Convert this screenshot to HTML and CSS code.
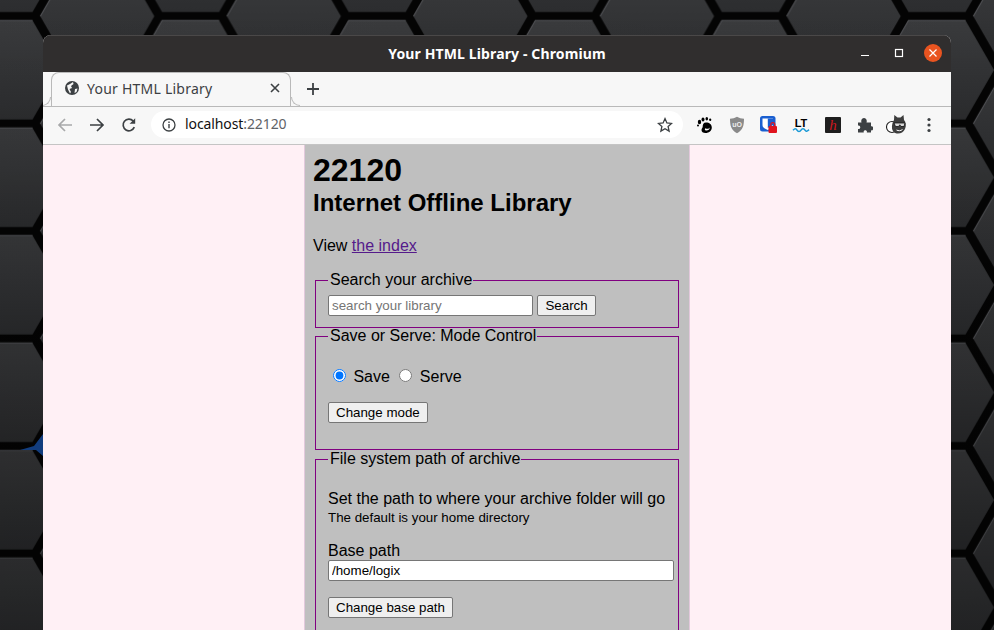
FILE: index.html
```html
<!DOCTYPE html>
<html lang="en">
<head>
<meta charset="utf-8">
<title>Your HTML Library</title>
<link rel="stylesheet" href="styles.css">
</head>
<body>
<svg class="wallpaper" width="994" height="630" aria-hidden="true">
  <defs>
    <linearGradient id="hexfill" x1="0" y1="0" x2="0" y2="1">
      <stop offset="0" stop-color="#3a3b3d"/>
      <stop offset="1" stop-color="#2c2d2f"/>
    </linearGradient>
    <linearGradient id="shade" x1="0" y1="0" x2="0" y2="1">
      <stop offset="0" stop-color="#000" stop-opacity="0"/>
      <stop offset="1" stop-color="#000" stop-opacity=".3"/>
    </linearGradient>
    <g id="hex">
      <polygon points="-57,0 -28.5,-49.5 28.5,-49.5 57,0 28.5,49.5 -28.5,49.5" fill="url(#hexfill)"/>
      <polyline points="-57,0 -28.5,-49.5 28.5,-49.5" fill="none" stroke="#55565a" stroke-width="1"/>
    </g>
    <pattern id="hexes" width="186.6" height="107.5" patternUnits="userSpaceOnUse" patternTransform="translate(4 70)">
      <rect width="186.6" height="107.5" fill="#040404"/>
      <use href="#hex" x="0" y="0"/>
      <use href="#hex" x="186.6" y="0"/>
      <use href="#hex" x="0" y="107.5"/>
      <use href="#hex" x="186.6" y="107.5"/>
      <use href="#hex" x="93.3" y="53.75"/>
    </pattern>
  </defs>
  <rect width="994" height="630" fill="url(#hexes)"/>
  <rect width="994" height="630" fill="url(#shade)"/>
  <path d="M20 450 L34 446 L43 434 L43 456 L36 450 Z" fill="#123d7e"/>
</svg>

<div class="window">
  <header class="titlebar">
    <span class="title">Your HTML Library - Chromium</span>
    <div class="winctrls">
      <svg class="winbtn" width="16" height="16" viewBox="0 0 16 16"><path d="M4 10.500h8" stroke="#fff" stroke-width="1.2"/></svg>
      <svg class="winbtn" width="16" height="16" viewBox="0 0 16 16"><rect x="4.500" y="4.500" width="7" height="7" fill="none" stroke="#fff" stroke-width="1.2"/></svg>
      <svg class="winbtn close" width="18" height="18" viewBox="0 0 18 18"><circle cx="9" cy="9" r="9" fill="#e95420"/><path d="M5.500 5.500l7 7M12.500 5.500l-7 7" stroke="#fff" stroke-width="1.2"/></svg>
    </div>
  </header>

  <div class="tabstrip">
    <div class="tab">
      <svg width="16" height="16" viewBox="0 0 16 16"><circle cx="8" cy="8" r="7" fill="#3c4043"/><path d="M3 5.500 L6 4 L9 2 L9.500 4 L7 6 L8 8 L5.500 9 L7 12 L6 13.500 L4 9.500 Z M11 9 L13.500 8.500 L12.500 12 L10.500 13 Z" fill="#f7f7f7"/></svg>
      <span class="tabtitle">Your HTML Library</span>
      <svg width="10" height="10" viewBox="0 0 10 10"><path d="M1 1l8 8M9 1l-8 8" stroke="#3c4043" stroke-width="1.6"/></svg>
    </div>
    <svg class="newtab" width="12" height="12" viewBox="0 0 12 12"><path d="M6 0v12M0 6h12" stroke="#3c4043" stroke-width="1.8"/></svg>
  </div>

  <div class="toolbar">
    <svg class="navicon" width="16" height="16" viewBox="0 0 16 16"><path d="M15 8H2M8 2 2 8l6 6" fill="none" stroke="#a8a9aa" stroke-width="1.7"/></svg>
    <svg class="navicon" width="16" height="16" viewBox="0 0 16 16"><path d="M1 8h13M8 2l6 6-6 6" fill="none" stroke="#3c4043" stroke-width="1.7"/></svg>
    <svg class="navicon" width="16" height="16" viewBox="0 0 16 16"><path d="M13.300 10.200A5.800 5.800 0 1 1 12.200 4" fill="none" stroke="#3c4043" stroke-width="1.7"/><path d="M14.200 1.200v5.600H8.600z" fill="#3c4043"/></svg>
    <div class="omnibox">
      <svg width="14" height="14" viewBox="0 0 14 14"><circle cx="7" cy="7" r="6" fill="none" stroke="#3c4043" stroke-width="1.3"/><path d="M7 6v4.200M7 3.400v1.500" stroke="#3c4043" stroke-width="1.4"/></svg>
      <span class="url">localhost<span class="urlport">:22120</span></span>
      <svg class="star" width="16" height="16" viewBox="0 0 16 16"><path d="M8 1.600l1.900 4.300 4.700.5-3.500 3.100 1 4.600L8 11.700l-4.100 2.400 1-4.600L1.400 6.400l4.700-.5z" fill="none" stroke="#3c4043" stroke-width="1.3"/></svg>
    </div>
    <div class="extensions">
      <svg width="18" height="18" viewBox="0 0 18 18"><path d="M10 6.500c3.500 0 5.800 2 5.800 5 0 3.300-2.800 5.500-6.300 5.500-2.500 0-4-1.200-4-3 0-1.500 1.200-2 1.200-3.300C6.700 8.500 7.500 6.500 10 6.500z" fill="#000"/><path d="M10.500 12.700c1.300.5 2.700-.2 3.300-1.500-.2 2.200-1.700 3.500-3.800 3.300-1.200-.1-1.500-1.500-.6-2.300z" fill="#f7f7f7"/><ellipse cx="3.500" cy="6" rx="1.700" ry="2.200" fill="#000"/><ellipse cx="7" cy="3.500" rx="1.500" ry="2" fill="#000"/><ellipse cx="10.800" cy="2.800" rx="1.300" ry="1.700" fill="#000"/><ellipse cx="14.200" cy="3.800" rx="1.100" ry="1.300" fill="#000"/><circle cx="2" cy="9.500" r="1" fill="#000"/></svg>
      <svg width="18" height="18" viewBox="0 0 18 18"><path d="M9 .8c2 1.200 4.500 1.800 7 2 0 6.500-1 11.500-7 14.400-6-2.900-7-7.900-7-14.400C4.500 2.600 7 2 9 .8z" fill="#8a8a8a"/><text x="9" y="11" class="ublock">uO</text></svg>
      <svg width="18" height="18" viewBox="0 0 18 18"><rect x="0" y="0" width="15.500" height="15.500" rx="2.500" fill="#1a5fd0"/><path d="M2.500 2.500h10.500v6.500c0 2.500-2.500 3.800-5.200 5-3-1.200-5.300-2.500-5.300-5z" fill="#fff"/><path d="M7.800 2.500h5.200v6.500L7.800 12z" fill="#1a5fd0"/><rect x="8.500" y="10" width="8.500" height="7" rx="1" fill="#e0141e"/><path d="M10.800 10v-1.300a2 2 0 0 1 4 0v1.300" fill="none" stroke="#e0141e" stroke-width="1.3"/></svg>
      <svg width="18" height="18" viewBox="0 0 18 18"><text x="9" y="10.500" class="lt">LT</text><path d="M1 14.200c2-1.800 3-1.800 4 0s3 1.800 4 0 3-1.800 4 0 2 1 4-.5" fill="none" stroke="#1b9ad6" stroke-width="1.5"/></svg>
      <svg width="16" height="16" viewBox="0 0 16 16"><rect width="16" height="16" rx="1" fill="#1e1e1e"/><text x="8" y="13" class="hypo">h</text></svg>
      <svg width="16" height="16" viewBox="0 0 16 16"><path d="M1 5.500h3.500c-1-3 1-4.500 2.500-4.500s3.500 1.500 2.500 4.500H14v3.800c3-1 3 5 0 4v2.200H9.800c1-3-4-3-3 0H1v-3.600c3 .8 3-4.200 0-3.400z" fill="#3c4043"/></svg>
      <svg width="22" height="22" viewBox="0 0 22 22"><circle cx="6" cy="13" r="5.500" fill="#fff" stroke="#222" stroke-width="1.100"/><path d="M8 6l.3-5 3.200 2.500h3l3-2.500.5 5c2 2 2.500 6 1 9-1.500 3-4 4.500-7 4.500-3 0-5.500-2-6-5-.3-3 .5-6.500 2-8.500z" fill="#3d3d3d"/><path d="M8 9h11l-1 3.500h-3l-1.200-1.700-1.200 1.700H9.500z" fill="#d8d8d8" stroke="#111" stroke-width=".8"/><path d="M10.500 16c2 1 4 1 6-.5" stroke="#fff" stroke-width="1" fill="none"/></svg>
      <svg width="4" height="16" viewBox="0 0 4 16"><circle cx="2" cy="2.500" r="1.600" fill="#3c4043"/><circle cx="2" cy="8" r="1.600" fill="#3c4043"/><circle cx="2" cy="13.500" r="1.600" fill="#3c4043"/></svg>
    </div>
  </div>

  <main class="page">
    <div class="column">
      <h1 class="port">22120</h1>
      <h2 class="libname">Internet Offline Library</h2>
      <p class="intro">View <a class="visited" href="#index">the index</a></p>
      <form class="panel">
        <fieldset class="group group-search">
          <legend>Search your archive</legend>
          <input class="field field-search" type="text" placeholder="search your library">
          <button class="btn" type="button">Search</button>
        </fieldset>
      </form>
      <form class="panel">
        <fieldset class="group group-mode">
          <legend>Save or Serve: Mode Control</legend>
          <p class="radios">
            <label class="radio"><input type="radio" name="mode" checked> Save</label>
            <label class="radio"><input type="radio" name="mode"> Serve</label>
          </p>
          <p class="action"><button class="btn" type="button">Change mode</button></p>
        </fieldset>
      </form>
      <form class="panel">
        <fieldset class="group group-path">
          <legend>File system path of archive</legend>
          <p class="lead">Set the path to where your archive folder will go<br><small class="note">The default is your home directory</small></p>
          <p class="pathrow"><label class="pathlabel">Base path<br><input class="field field-path" type="text" value="/home/logix"></label></p>
          <p class="action"><button class="btn" type="button">Change base path</button></p>
        </fieldset>
      </form>
    </div>
  </main>
</div>
</body>
</html>
```
FILE: styles.css
```css
html, body { margin: 0; padding: 0; height: 630px; overflow: hidden; background: #111; }
body { position: relative; font-family: "Liberation Sans", Arial, sans-serif; }

.wallpaper { position: absolute; left: 0; top: 0; display: block; }

.window {
  position: relative;
  margin: 35px 0 0 43px;
  width: 908px;
  height: 595px;
  border-radius: 8px 8px 0 0;
  overflow: hidden;
  display: flex;
  flex-direction: column;
  background: #f7f7f7;
}

.titlebar {
  position: relative;
  flex: 0 0 37px;
  box-sizing: border-box;
  border-top: 1px solid #4a4848;
  padding-bottom: 2px;
  background: #302e2e;
  display: flex;
  align-items: center;
  justify-content: center;
}
.title { color: #fff; font: 700 14px "Noto Sans", sans-serif; letter-spacing: .13px; }
.winctrls {
  position: absolute;
  right: 9px;
  top: 8px;
  display: flex;
  align-items: center;
  gap: 18px;
}
.winbtn { display: block; }
.winctrls .close { margin-left: -1px; }

.tabstrip {
  flex: 0 0 34px;
  box-sizing: border-box;
  background: #f7f7f7;
  border-bottom: 1px solid #b9b9b9;
  display: flex;
  align-items: flex-start;
  padding-left: 8px;
}
.tab {
  position: relative;
  box-sizing: border-box;
  width: 240px;
  height: 34px;
  background: #f7f7f7;
  border: 1px solid #b9b9b9;
  border-bottom: 0;
  border-radius: 8px 8px 0 0;
  display: flex;
  align-items: center;
  padding: 0 10px 3px 12px;
  z-index: 1;
}
.tab::before, .tab::after {
  content: "";
  position: absolute;
  bottom: 0;
  width: 9px;
  height: 9px;
  box-sizing: border-box;
  border-bottom: 1px solid #b9b9b9;
}
.tab::before { left: -10px; border-right: 1px solid #b9b9b9; border-bottom-right-radius: 9px; background: #f7f7f7; }
.tab::after { right: -10px; border-left: 1px solid #b9b9b9; border-bottom-left-radius: 9px; background: #f7f7f7; }
.tabtitle {
  flex: 1;
  margin-left: 7px;
  color: #3c4043;
  font: 14px "Noto Sans", sans-serif;
  letter-spacing: .23px;
}
.newtab { margin: 11px 0 0 16px; }

.toolbar {
  flex: 0 0 38px;
  box-sizing: border-box;
  background: #f7f7f7;
  border-bottom: 1px solid #c4c4c4;
  display: flex;
  align-items: center;
  padding: 0 0 2px 14px;
}
.navicon { margin-right: 16px; }
.navicon:nth-child(3) { margin-right: 14px; }
.omnibox {
  box-sizing: border-box;
  width: 532px;
  height: 27px;
  border-radius: 14px;
  background: #fff;
  display: flex;
  align-items: center;
  padding: 0 10px 0 11px;
}
.url { flex: 1; margin-left: 9px; padding-bottom: 3px; color: #111; font: 14px "Noto Sans", sans-serif; letter-spacing: -.1px; }
.urlport { color: #5f6368; }
.extensions {
  display: grid;
  grid-template-columns: repeat(8, 32px);
  justify-items: center;
  align-items: center;
  margin-left: 6px;
}
.extensions svg { display: block; }
.ublock { font: 700 7px "Liberation Sans", sans-serif; fill: #eee; text-anchor: middle; }
.lt { font: 700 11px "Liberation Sans", sans-serif; fill: #000; text-anchor: middle; }
.hypo { font: italic 400 15px "Liberation Serif", serif; fill: #d0181f; text-anchor: middle; }

.page {
  flex: 1;
  min-height: 0;
  background: #fff0f5;
  display: flex;
  justify-content: center;
  overflow: hidden;
}
.column {
  box-sizing: border-box;
  flex: 0 0 386px;
  min-width: 0;
  height: 700px;
  padding: 0 8px;
  background: #bfbfbf;
  border-left: 1px solid #e3c9dc;
  border-right: 1px solid #e3c9dc;
  color: #000;
  font-size: 16px;
}
.port { margin: 7px 0 0; font-size: 32px; line-height: 37px; font-weight: 700; }
.libname { margin: 0; font-size: 24px; line-height: 28px; font-weight: 700; }
.intro { margin: 20px 0 0; line-height: 18px; }
.visited { color: #551a8b; }

.panel { margin: 0; }
.panel:first-of-type { margin-top: 16px; }
.group {
  min-width: 0;
  margin: 0 2px;
  padding: 0 12px 10px;
  border: 1px solid #800080;
}
.group legend { padding: 0 1px 0 2px; line-height: 18px; }

.field {
  box-sizing: border-box;
  height: 21px;
  padding: 1px 3px;
  border: 1px solid #767676;
  border-radius: 2px;
  background: #fff;
  font: 13.333px "Liberation Sans", sans-serif;
  color: #000;
}
.field-search { width: 205px; }
.field-path { width: 346px; display: block; }
.btn {
  box-sizing: border-box;
  height: 21px;
  padding: 1px 7px;
  border: 1px solid #767676;
  border-radius: 2px;
  background: #efefef;
  color: #000;
  font: 13.333px "Liberation Sans", sans-serif;
}
.group-search { padding-top: 6px; padding-bottom: 11px; margin-bottom: -.6px; }
.group-search .field { vertical-align: top; }
.group-search .btn { vertical-align: top; }

.radios { margin: 21px 0 0; line-height: 18px; }
.radio input { margin: 3px 3px 0 5px; }
.action { margin: 15.5px 0 0; line-height: 21px; }
.action .btn { display: block; }
.group-mode { padding-bottom: 26px; margin-bottom: .5px; }

.lead { margin: 21.2px 0 0; line-height: 18px; }
.note { font-size: 13.333px; line-height: 15px; display: inline-block; }
.pathrow { margin: 16px 0 0; line-height: 18px; }
.pathlabel { display: block; }
.group-path { height: 300px; }
.group-path .action { margin-top: 16.4px; }
```
